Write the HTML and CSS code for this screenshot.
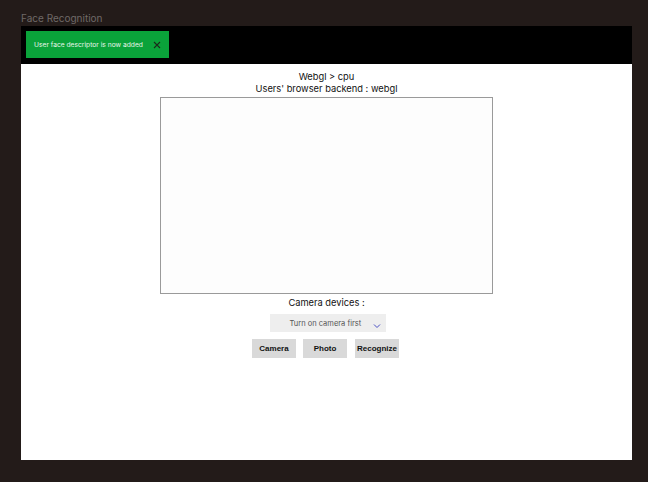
FILE: index.html
```html
<!DOCTYPE html>
<html>
<head>
<meta charset="utf-8">
<link rel="stylesheet" href="styles.css">
</head>
<body>
<div class="title">Face Recognition</div>
<div class="frame">
  <div class="header">
    <div class="toast">
      <span class="toast-text">User face descriptor is now added</span>
      <svg class="toast-close" width="8" height="8" viewBox="0 0 8 8"><path d="M1 1L7 7M7 1L1 7" stroke="#1b2a1b" stroke-width="1.1" fill="none"/></svg>
    </div>
  </div>
  <div class="content">
    <div class="info">Webgl &gt; cpu</div>
    <div class="info">Users' browser backend : webgl</div>
    <div class="video"></div>
    <div class="label">Camera devices :</div>
    <div class="select">
      <span class="select-text">Turn on camera first</span>
      <svg class="chev" width="8" height="6" viewBox="0 0 8 6"><path d="M1 1.5L4 4.5L7 1.5" stroke="#4a4fc4" stroke-width="1" fill="none"/></svg>
    </div>
    <div class="buttons">
      <button class="btn">Camera</button>
      <button class="btn">Photo</button>
      <button class="btn">Recognize</button>
    </div>
  </div>
</div>
</body>
</html>
```
FILE: styles.css
```css
html, body {
  margin: 0;
  padding: 0;
  background: #231b19;
  font-family: Inter, "Liberation Sans", sans-serif;
}
.title {
  height: 26px;
  box-sizing: border-box;
  padding: 11px 0 0 21px;
  font-size: 10px;
  line-height: 14px;
  color: #6f6967;
}
.frame {
  margin-left: 21px;
  width: 611px;
  height: 434px;
  background: #fff;
  display: flex;
  flex-direction: column;
}
.header {
  height: 38px;
  background: #000;
  padding: 5px;
  box-sizing: border-box;
}
.toast {
  width: 143px;
  height: 27px;
  background: #0aa33a;
  display: flex;
  align-items: center;
  box-sizing: border-box;
  padding-left: 8px;
}
.toast-text {
  color: #e8f5ea;
  font-size: 6.7px;
}
.toast-close {
  margin-left: 10px;
}
.content {
  display: flex;
  flex-direction: column;
  align-items: center;
  padding-top: 7px;
}
.info {
  font-size: 9.3px;
  line-height: 12px;
  color: #111;
}
.video {
  margin-top: 2px;
  width: 333px;
  height: 197px;
  box-sizing: border-box;
  border: 1px solid #9a9a9a;
  background: #fdfdfd;
}
.label {
  margin-top: 2px;
  font-size: 9.3px;
  line-height: 14px;
  color: #111;
}
.select {
  margin-top: 4px;
  margin-left: 2px;
  width: 116px;
  height: 18px;
  background: #eeeeee;
  display: flex;
  align-items: center;
  box-sizing: border-box;
  padding-left: 20px;
}
.select-text {
  font-size: 7.5px;
  color: #555;
}
.chev {
  margin-left: 12px;
  margin-top: 5px;
}
.buttons {
  margin-top: 7px;
  margin-right: 2px;
  display: flex;
  gap: 7px;
}
.btn {
  border: none;
  background: #d9d9d9;
  height: 19px;
  width: 44px;
  padding: 0;
  font-family: "Liberation Sans", Arial, sans-serif;
  font-weight: bold;
  font-size: 8px;
  color: #111;
}
.btn:last-child {
  margin-left: 1px;
}
```
